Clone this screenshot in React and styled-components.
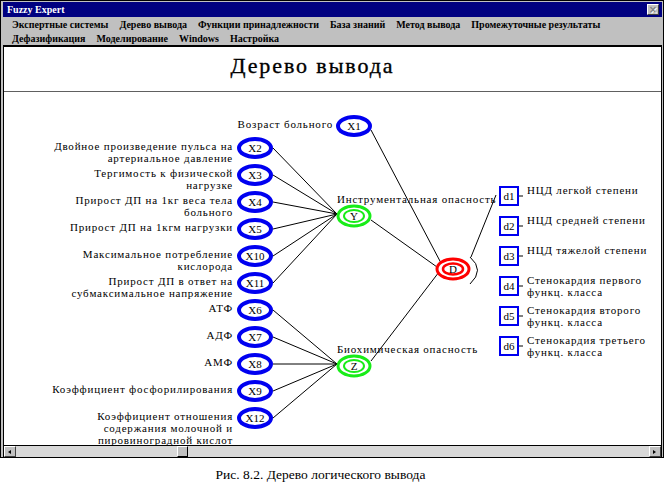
import styled, { createGlobalStyle } from "styled-components";

const GlobalStyle = createGlobalStyle`
  html, body {
    margin: 0;
    padding: 0;
    background: #fff;
  }
  body {
    font-family: "Liberation Serif", "Times New Roman", serif;
    color: #000;
  }
`;

// canvas origin in page coordinates (diagram data is written in page px)
const OX = 4;
const OY = 93;
const CANVAS_W = 657;
const CANVAS_H = 353;

const BLUE = "#0000f0";
const GREEN = "#18ec18";
const RED = "#ff0000";

const inputs = [
  { id: "X2", y: 149, to: "Y", lines: ["Двойное произведение пульса на", "артериальное давление"] },
  { id: "X3", y: 176, to: "Y", lines: ["Тергимость к физической", "нагрузке"] },
  { id: "X4", y: 203, to: "Y", lines: ["Прирост ДП на 1кг веса тела", "больного"] },
  { id: "X5", y: 230, to: "Y", lines: ["Прирост ДП на 1кгм нагрузки"] },
  { id: "X10", y: 257, to: "Y", lines: ["Максимальное потребление", "кислорода"] },
  { id: "X11", y: 284, to: "Y", lines: ["Прирост ДП в ответ на", "субмаксимальное напряжение"] },
  { id: "X6", y: 311, to: "Z", lines: ["АТФ"] },
  { id: "X7", y: 338, to: "Z", lines: ["АДФ"] },
  { id: "X8", y: 365, to: "Z", lines: ["АМФ"] },
  { id: "X9", y: 392, to: "Z", lines: ["Коэффициент фосфорилирования"] },
  { id: "X12", y: 419, to: "Z", lines: ["Коэффициент отношения", "содержания молочной и", "пировиноградной кислот"] },
];

const outputs = [
  { id: "d1", y: 197, lines: ["НЦД легкой степени"] },
  { id: "d2", y: 227, lines: ["НЦД средней степени"] },
  { id: "d3", y: 257, lines: ["НЦД тяжелой степени"] },
  { id: "d4", y: 287, lines: ["Стенокардия первого", "функц. класса"] },
  { id: "d5", y: 317, lines: ["Стенокардия второго", "функц. класса"] },
  { id: "d6", y: 347, lines: ["Стенокардия третьего", "функц. класса"] },
];

const hubs = {
  Y: { x: 354, y: 217, label: "Инструментальная опасность" },
  Z: { x: 354, y: 367, label: "Биохимическая опасность" },
};

const menuRows = [
  ["Экспертные системы", "Дерево вывода", "Функции принадлежности", "База знаний", "Метод вывода", "Промежуточные результаты"],
  ["Дефазификация", "Моделирование", "Windows", "Настройка"],
];

const App = () => {
  return (
    <>
      <GlobalStyle />
      <Window>
        <TitleBar>
          <span>Fuzzy Expert</span>
          <CloseBtn>×</CloseBtn>
        </TitleBar>
        <Menu>
          {menuRows.map((row, i) => (
            <MenuRow key={i}>
              {row.map((item) => (
                <MenuItem key={item}>{item}</MenuItem>
              ))}
            </MenuRow>
          ))}
        </Menu>
        <Content>
          <Header>
            <h1>Дерево вывода</h1>
          </Header>
          <Canvas>
            <Edges viewBox={`${OX} ${OY} ${CANVAS_W} ${CANVAS_H}`}>
              {inputs.map((n) => (
                <line
                  key={n.id}
                  x1={273}
                  y1={n.y}
                  x2={337}
                  y2={hubs[n.to].y - 2}
                  stroke="#000"
                  strokeWidth="1"
                />
              ))}
              <line x1={371} y1={131} x2={441} y2={264} stroke="#000" />
              <line x1={371} y1={221} x2={437} y2={268} stroke="#000" />
              <line x1={371} y1={362} x2={439} y2={273} stroke="#000" />
              <line x1={496} y1={196} x2={471} y2={258} stroke="#000" />
              <path d="M470 258 Q485 271 470 285" fill="none" stroke="#000" />

              {inputs.map((n) => (
                <g key={n.id}>
                  <ellipse cx={255} cy={n.y} rx={16} ry={9} fill="#fff" stroke={BLUE} strokeWidth="4" />
                  <NodeText x={255} y={n.y + 4}>{n.id}</NodeText>
                </g>
              ))}
              <ellipse cx={354} cy={127} rx={16} ry={9} fill="#fff" stroke={BLUE} strokeWidth="4" />
              <NodeText x={354} y={131}>X1</NodeText>

              {Object.entries(hubs).map(([id, h]) => (
                <g key={id}>
                  <ellipse cx={h.x} cy={h.y} rx={16} ry={10} fill="#fff" stroke={GREEN} strokeWidth="3" />
                  <ellipse cx={h.x} cy={h.y} rx={10} ry={6} fill="none" stroke={GREEN} strokeWidth="2" />
                  <NodeText x={h.x} y={h.y + 4}>{id}</NodeText>
                </g>
              ))}

              <ellipse cx={453} cy={270} rx={16} ry={10} fill="#fff" stroke={RED} strokeWidth="3" />
              <ellipse cx={453} cy={270} rx={10} ry={5.5} fill="none" stroke={RED} strokeWidth="2.5" />
              <NodeText x={453} y={274}>D</NodeText>

              {outputs.map((o) => (
                <g key={o.id}>
                  <rect x={500} y={o.y - 9} width={18} height={18} fill="#fff" stroke={BLUE} strokeWidth="2" />
                  <line x1={519} y1={o.y} x2={523} y2={o.y} stroke="#000" />
                  <NodeText x={509} y={o.y + 4}>{o.id}</NodeText>
                </g>
              ))}
            </Edges>

            <Label $right={333} $top={119}>Возраст больного</Label>
            {inputs.map((n) => (
              <Label key={n.id} $right={233} $top={n.y - 8}>
                {n.lines.map((l) => (
                  <div key={l}>{l}</div>
                ))}
              </Label>
            ))}
            {Object.entries(hubs).map(([id, h]) => (
              <Label key={id} $left={337} $top={h.y - 23}>
                {h.label}
              </Label>
            ))}
            {outputs.map((o) => (
              <Label key={o.id} $left={527} $top={o.y - 12}>
                {o.lines.map((l) => (
                  <div key={l}>{l}</div>
                ))}
              </Label>
            ))}
          </Canvas>
          <Scrollbar>
            <ScrollBtn $dir="left" />
            <Track>
              <Thumb />
            </Track>
            <ScrollBtn $dir="right" />
          </Scrollbar>
        </Content>
      </Window>
      <Caption>Рис. 8.2. Дерево логического вывода</Caption>
    </>
  );
};

export default App;

const Window = styled.div`
  width: 664px;
  height: 458px;
  box-sizing: border-box;
  border: 1px solid #000;
  background: #c0c0c0;
  padding: 1px 1px 0 2px;
  display: flex;
  flex-direction: column;
`;

const TitleBar = styled.div`
  height: 15px;
  background: #000080;
  color: #fff;
  display: flex;
  align-items: center;
  justify-content: space-between;
  padding: 0 3px 0 4px;
  font-size: 10px;
  font-weight: bold;
`;

const CloseBtn = styled.div`
  width: 12px;
  height: 11px;
  box-sizing: border-box;
  background: #c0c0c0;
  border: 1px solid;
  border-color: #fff #404040 #404040 #fff;
  color: #808080;
  font-family: "DejaVu Sans", sans-serif;
  font-size: 10px;
  line-height: 9px;
  text-align: center;
  text-shadow: 1px 1px 0 #fff;
`;

const Menu = styled.div`
  height: 28px;
  padding-left: 9px;
  display: flex;
  flex-direction: column;
`;

const MenuRow = styled.div`
  display: flex;
  gap: 11px;
  height: 14px;
  align-items: center;
`;

const MenuItem = styled.span`
  font-size: 10px;
  font-weight: bold;
  white-space: nowrap;
`;

const Content = styled.div`
  flex: 1;
  background: #fff;
  border-top: 2px solid #000;
  border-left: 1px solid #000;
  border-right: 1px solid #000;
  display: flex;
  flex-direction: column;
`;

const Header = styled.div`
  height: 45px;
  box-sizing: border-box;
  border-bottom: 1px solid #606060;
  display: flex;
  align-items: center;
  justify-content: center;
  padding: 0 40px 6px 0;
  h1 {
    margin: 0;
    font-size: 22px;
    font-weight: normal;
    letter-spacing: 1.9px;
    -webkit-text-stroke: 0.35px #000;
  }
`;

const Canvas = styled.div`
  position: relative;
  width: ${CANVAS_W}px;
  height: ${CANVAS_H}px;
  overflow: hidden;
`;

const Edges = styled.svg`
  position: absolute;
  inset: 0;
  width: ${CANVAS_W}px;
  height: ${CANVAS_H}px;
`;

const NodeText = styled.text`
  font-family: "Liberation Serif", serif;
  font-size: 11px;
  text-anchor: middle;
  fill: #000;
`;

const Label = styled.div.attrs((p) => ({
  style: {
    top: p.$top - OY,
    left: p.$left !== undefined ? p.$left - OX : undefined,
    right: p.$right !== undefined ? CANVAS_W - (p.$right - OX) : undefined,
  },
}))`
  position: absolute;
  font-size: 11px;
  line-height: 12px;
  letter-spacing: 0.8px;
  white-space: nowrap;
  text-align: ${(p) => (p.$right !== undefined ? "right" : "left")};
`;

const Scrollbar = styled.div`
  height: 11px;
  display: flex;
  background: #c0c0c0;
  border-top: 1px solid #000;
`;

const ScrollBtn = styled.div`
  width: 12px;
  height: 11px;
  box-sizing: border-box;
  background: #c0c0c0;
  border: 1px solid;
  border-color: #fff #404040 #404040 #fff;
  position: relative;
  &::after {
    content: "";
    position: absolute;
    top: 3px;
    left: 3px;
    border-top: 2px solid transparent;
    border-bottom: 2px solid transparent;
    ${(p) =>
      p.$dir === "left"
        ? "border-right: 3px solid #000;"
        : "border-left: 3px solid #000;"}
  }
`;

const Track = styled.div`
  flex: 1;
  background: #d8d8d8;
  position: relative;
`;

const Thumb = styled.div`
  position: absolute;
  left: 161px;
  top: 0;
  width: 11px;
  height: 11px;
  box-sizing: border-box;
  background: #c0c0c0;
  border: 1px solid;
  border-color: #fff #000 #000 #fff;
`;

const Caption = styled.div`
  width: 669px;
  box-sizing: border-box;
  padding: 9px 28px 0 0;
  text-align: center;
  font-size: 13.5px;
`;
